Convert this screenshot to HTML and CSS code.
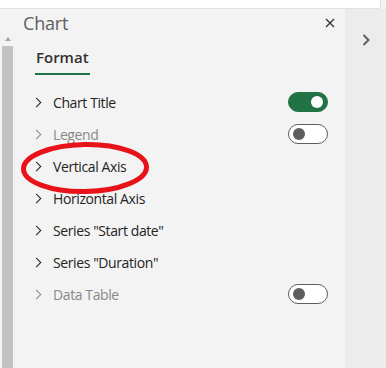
FILE: index.html
```html
<!DOCTYPE html>
<html lang="en">
<head>
  <meta charset="UTF-8">
  <title>Chart Format Pane</title>
  <link rel="stylesheet" href="styles.css">
</head>
<body>
  <div class="topbar"></div>
  <div class="main">
    <div class="scrollbar">
      <div class="scroll-up"></div>
      <div class="thumb"></div>
    </div>

    <div class="pane">
      <div class="pane-header">
        <h1>Chart</h1>
        <button class="close" aria-label="Close">
          <svg width="10" height="10" viewBox="0 0 10 10"><path d="M1 1 L9 9 M9 1 L1 9" stroke="#323130" stroke-width="1.3" fill="none"/></svg>
        </button>
      </div>

      <div class="tabs">
        <span class="tab active">Format</span>
      </div>

      <ul class="sections">
        <li class="section">
          <span class="chev"></span>
          <span class="label">Chart Title</span>
          <span class="toggle on"></span>
        </li>
        <li class="section disabled">
          <span class="chev"></span>
          <span class="label">Legend</span>
          <span class="toggle"></span>
        </li>
        <li class="section">
          <span class="chev"></span>
          <span class="label">Vertical Axis</span>
        </li>
        <li class="section">
          <span class="chev"></span>
          <span class="label">Horizontal Axis</span>
        </li>
        <li class="section">
          <span class="chev"></span>
          <span class="label">Series "Start date"</span>
        </li>
        <li class="section">
          <span class="chev"></span>
          <span class="label">Series "Duration"</span>
        </li>
        <li class="section disabled">
          <span class="chev"></span>
          <span class="label">Data Table</span>
          <span class="toggle"></span>
        </li>
      </ul>
    </div>

    <div class="side">
      <svg width="10" height="14" viewBox="0 0 10 14"><path d="M2.5 2 L7.5 7 L2.5 12" stroke="#605e5c" stroke-width="2" fill="none"/></svg>
    </div>
  </div>

  <!-- hand-drawn highlight -->
  <svg class="mark" width="140" height="62" viewBox="0 0 140 62">
    <ellipse cx="70" cy="31" rx="61.5" ry="23.5" fill="none" stroke="#e8121b" stroke-width="5" transform="rotate(-1 70 31)"/>
  </svg>
</body>
</html>
```

FILE: styles.css
```css
body {
  margin: 0;
  width: 386px;
  height: 368px;
  overflow: hidden;
  background: #f3f3f3;
  font-family: "Segoe UI", "Open Sans", sans-serif;
  position: relative;
}

.topbar {
  height: 8px;
  width: 380px;
  background: #fff;
  border-bottom: 1px solid #e1e1e1;
  border-right: 1px solid #e1e1e1;
}

.main {
  display: flex;
  height: 359px;
}

.scrollbar {
  width: 13px;
  display: flex;
  flex-direction: column;
  align-items: flex-end;
}

.scroll-up {
  width: 0;
  height: 0;
  margin: 28px 2px 0 0;
  border-left: 3.5px solid transparent;
  border-right: 3.5px solid transparent;
  border-bottom: 4px solid #a6a6a6;
}

.thumb {
  width: 11px;
  flex: 1;
  margin-top: 5px;
  background: #c2c2c2;
}

.pane {
  width: 332px;
  padding: 0 17px 0 10px;
  box-sizing: border-box;
}

.pane-header {
  display: flex;
  justify-content: space-between;
  align-items: center;
  height: 28px;
}

.pane-header h1 {
  margin: 0;
  font-size: 18px;
  font-weight: 400;
  color: #605e5c;
  letter-spacing: -0.2px;
}

.close {
  border: none;
  background: none;
  padding: 0;
  margin-right: -7px;
  display: flex;
}

.tabs {
  display: flex;
  margin: 10px 0 0 12px;
}

.tab {
  font-size: 15px;
  font-weight: 600;
  color: #323130;
  padding: 0 1px 6px;
  border-bottom: 2px solid #217346;
}

.sections {
  list-style: none;
  margin: 11px 0 0;
  padding: 0;
}

.section {
  display: flex;
  align-items: center;
  height: 32px;
  padding-left: 12px;
  font-size: 14px;
  letter-spacing: -0.4px;
  color: #252423;
}

.section.disabled {
  color: #8a8886;
}

.chev {
  width: 6px;
  height: 6px;
  border-top: 1.2px solid currentColor;
  border-right: 1.2px solid currentColor;
  transform: rotate(45deg);
  margin: 0 13px 0 -2px;
}

.label {
  flex: 1;
}

.toggle {
  width: 40px;
  height: 20px;
  box-sizing: border-box;
  border: 1px solid #605e5c;
  border-radius: 10px;
  background: #fff;
  position: relative;
}

.toggle::after {
  content: "";
  position: absolute;
  top: 3px;
  left: 4px;
  width: 12px;
  height: 12px;
  border-radius: 50%;
  background: #605e5c;
}

.toggle.on {
  background: #217346;
  border-color: #217346;
}

.toggle.on::after {
  left: auto;
  right: 4px;
  background: #fff;
}

.side {
  flex: 1;
  background: #ececec;
  display: flex;
  justify-content: center;
  padding-top: 24px;
  box-sizing: border-box;
}

.mark {
  position: absolute;
  left: 15px;
  top: 137px;
}
```
